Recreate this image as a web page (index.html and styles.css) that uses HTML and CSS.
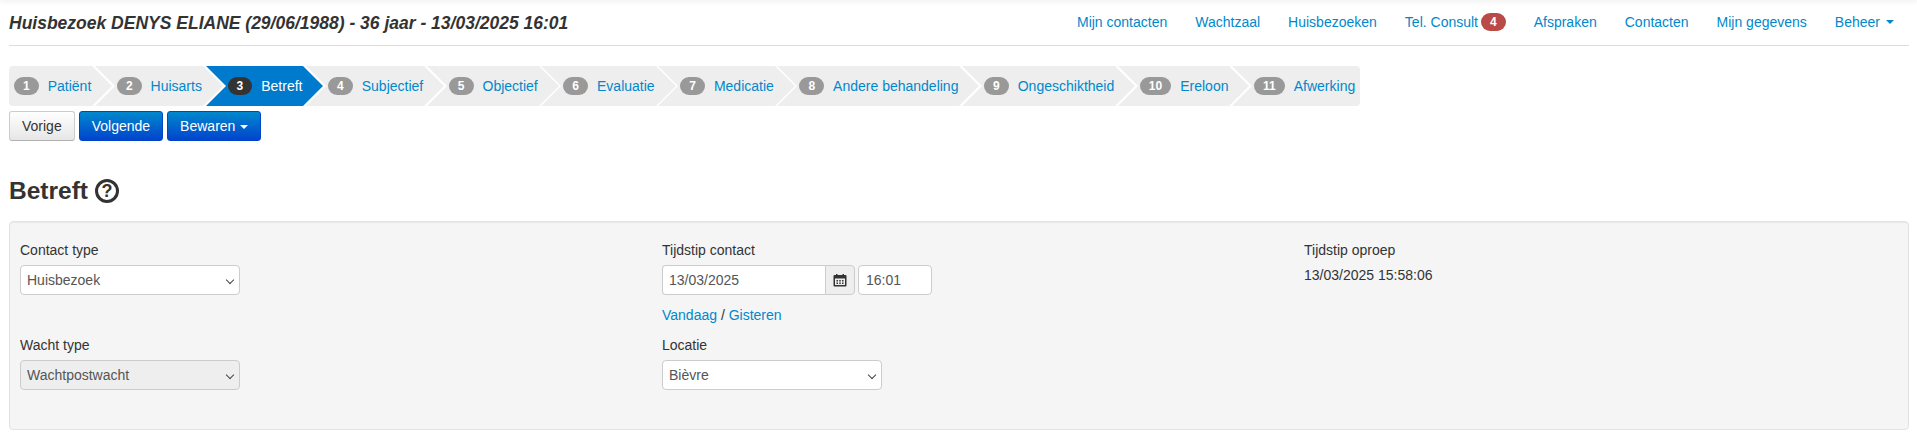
FILE: index.html
```html
<!DOCTYPE html>
<html>
	<head>
		<meta charset="utf-8">
		<title>Betreft</title>
		<link rel="stylesheet" href="styles.css">
	</head>
	<body>
		<div class="top_shadow"></div>
		<div class="container">
			<div class="page_header">
				<div class="page_title">Huisbezoek DENYS ELIANE (29/06/1988) - 36 jaar - 13/03/2025 16:01</div>
				<ul class="main_nav">
					<li><a href="#">Mijn contacten</a></li>
					<li><a href="#">Wachtzaal</a></li>
					<li><a href="#">Huisbezoeken</a></li>
					<li><a href="#">Tel. Consult</a><span class="badge badge_red">4</span></li>
					<li><a href="#">Afspraken</a></li>
					<li><a href="#">Contacten</a></li>
					<li><a href="#">Mijn gegevens</a></li>
					<li><a href="#">Beheer</a><span class="caret caret_blue"></span></li>
				</ul>
			</div>

			<ul class="wizard">
				<li><a href="#"><span class="badge">1</span>Patiënt</a></li>
				<li><a href="#"><span class="badge">2</span>Huisarts</a></li>
				<li class="active"><a href="#"><span class="badge">3</span>Betreft</a></li>
				<li><a href="#"><span class="badge">4</span>Subjectief</a></li>
				<li><a href="#"><span class="badge">5</span>Objectief</a></li>
				<li><a href="#"><span class="badge">6</span>Evaluatie</a></li>
				<li><a href="#"><span class="badge">7</span>Medicatie</a></li>
				<li><a href="#"><span class="badge">8</span>Andere behandeling</a></li>
				<li><a href="#"><span class="badge">9</span>Ongeschiktheid</a></li>
				<li><a href="#"><span class="badge">10</span>Ereloon</a></li>
				<li><a href="#"><span class="badge">11</span>Afwerking</a></li>
			</ul>

			<div class="button_row">
				<button class="btn">Vorige</button>
				<button class="btn btn_primary">Volgende</button>
				<button class="btn btn_primary">Bewaren<span class="caret"></span></button>
			</div>

			<h2 class="section_title">Betreft <span class="help_icon">?</span></h2>

			<div class="well">
				<div class="field">
					<label>Contact type</label>
					<div class="select_wrap">
						<select>
							<option>Huisbezoek</option>
						</select>
					</div>
				</div>
				<div class="field">
					<label>Tijdstip contact</label>
					<div class="date_row">
						<div class="date_group">
							<input type="text" class="date_input" value="13/03/2025">
							<span class="date_addon">
								<svg width="14" height="14" viewBox="0 0 14 14">
									<path fill="#333" d="M1.500 2H3V1h1.500v1h5V1H11v1h1.500a1 1 0 0 1 1 1v9.500a1 1 0 0 1-1 1h-11a1 1 0 0 1-1-1V3a1 1 0 0 1 1-1zM2 5.500v6.500h10V5.500z"/>
									<path fill="#333" d="M3.500 7h1.500v1.500H3.500zM6.250 7h1.500v1.500h-1.500zM9 7h1.500v1.500H9zM3.500 9.500h1.500V11H3.500zM6.250 9.500h1.500V11h-1.500zM9 9.500h1.500V11H9z"/>
								</svg>
							</span>
						</div>
						<input type="text" class="time_input" value="16:01">
					</div>
					<div class="date_links"><a href="#">Vandaag</a> / <a href="#">Gisteren</a></div>
				</div>
				<div class="field">
					<label>Tijdstip oproep</label>
					<div class="static_value">13/03/2025 15:58:06</div>
				</div>
				<div class="field">
					<label>Wacht type</label>
					<div class="select_wrap">
						<select disabled>
							<option>Wachtpostwacht</option>
						</select>
					</div>
				</div>
				<div class="field">
					<label>Locatie</label>
					<div class="select_wrap">
						<select>
							<option>Bièvre</option>
						</select>
					</div>
				</div>
			</div>
		</div>
	</body>
</html>
```

FILE: styles.css
```css
*{
	box-sizing:border-box;
}

body{
	margin:0;
	font-family:"Liberation Sans", Arial, sans-serif;
	font-size:14px;
	line-height:20px;
	color:#333;
	background-color:#fff;
}

a{
	color:#0088cc;
	text-decoration:none;
}

ul{
	list-style:none;
	margin:0;
	padding:0;
}

.top_shadow{
	height:0;
	box-shadow:0 0 5px 1px rgba(0,0,0,0.12);
}

.container{
	padding:0 8px 0 9px;
}

.page_header{
	display:flex;
	justify-content:space-between;
	align-items:center;
	height:46px;
	border-bottom:1px solid #ddd;
}

.page_title{
	font-size:17.5px;
	font-weight:bold;
	font-style:italic;
}

.main_nav{
	display:flex;
	align-items:center;
	gap:28px;
	padding-right:15px;
	margin-top:-2px;
}

.main_nav li{
	display:flex;
	align-items:center;
}

.badge{
	display:inline-block;
	height:18px;
	padding:0 9px;
	border-radius:9px;
	font-size:12px;
	font-weight:bold;
	line-height:18px;
	color:#fff;
	background-color:#999;
}

.badge_red{
	margin-left:3px;
	background-color:#b94a48;
}

.caret{
	display:inline-block;
	width:0;
	height:0;
	margin-left:5px;
	vertical-align:middle;
	border-top:4px solid #fff;
	border-left:4px solid transparent;
	border-right:4px solid transparent;
}

.caret_blue{
	margin-left:6px;
	border-top-color:#0088cc;
}

/* stappen */
.wizard{
	display:flex;
	margin-top:20px;
}

.wizard li{
	position:relative;
	margin-right:2.6px;
}

.wizard li:last-child{
	margin-right:0;
}

.wizard a{
	display:flex;
	align-items:center;
	gap:9px;
	height:40px;
	padding:0 1px 0 22px;
	background-color:#eee;
	white-space:nowrap;
}

.wizard li:first-child a{
	padding-left:5px;
	border-radius:4px 0 0 4px;
}

.wizard li:last-child a{
	padding-right:5px;
	border-radius:0 4px 4px 0;
}

.wizard li:before{
	content:"";
	position:absolute;
	top:0;
	left:0;
	z-index:1;
	border-top:20px solid transparent;
	border-bottom:20px solid transparent;
	border-left:20px solid #fff;
}

.wizard li:after{
	content:"";
	position:absolute;
	top:0;
	right:-20px;
	z-index:2;
	border-top:20px solid transparent;
	border-bottom:20px solid transparent;
	border-left:20px solid #eee;
}

.wizard li:first-child:before,
.wizard li:last-child:after{
	display:none;
}

.wizard .active a{
	color:#fff;
	background-color:#007acc;
}

.wizard .active:after{
	border-left-color:#007acc;
}

.wizard .active .badge{
	background-color:#333;
}

/* knoppen */
.button_row{
	display:flex;
	gap:4px;
	margin-top:5px;
}

.btn{
	height:30px;
	padding:0 12px;
	border:1px solid #ccc;
	border-bottom-color:#b3b3b3;
	border-radius:3px;
	font-family:inherit;
	font-size:14px;
	color:#333;
	background:linear-gradient(to bottom, #fff, #e6e6e6);
}

.btn_primary{
	border-color:#04c;
	color:#fff;
	background:linear-gradient(to bottom, #08c, #04c);
}

.section_title{
	display:flex;
	align-items:center;
	gap:7px;
	margin:35px 0 15px;
	font-size:24.5px;
	line-height:30px;
}

.help_icon{
	width:24px;
	height:24px;
	border:3px solid #333;
	border-radius:50%;
	font-size:18px;
	line-height:18px;
	text-align:center;
}

/* formulier */
.well{
	display:grid;
	grid-template-columns:642px 642px 1fr;
	align-content:start;
	row-gap:10px;
	height:209px;
	padding:18px 10px 0;
	border:1px solid #e3e3e3;
	border-radius:4px;
	background-color:#f5f5f5;
	box-shadow:inset 0 1px 1px rgba(0,0,0,0.05);
}

.field label{
	display:block;
	margin-bottom:5px;
}

select,
input{
	height:30px;
	border:1px solid #ccc;
	border-radius:4px;
	font-family:inherit;
	font-size:14px;
	color:#555;
	background-color:#fff;
}

.select_wrap{
	position:relative;
	width:220px;
}

.select_wrap:after{
	content:"";
	position:absolute;
	top:12px;
	right:7px;
	width:5px;
	height:5px;
	border-right:1px solid #444;
	border-bottom:1px solid #444;
	transform:rotate(45deg);
	pointer-events:none;
}

.select_wrap select{
	display:block;
	width:100%;
	padding:0 20px 0 6px;
	appearance:none;
}

select:disabled{
	color:#555;
	background-color:#eee;
	opacity:1;
}

.date_row{
	display:flex;
	gap:3px;
}

.date_group{
	display:flex;
}

.date_input{
	width:163px;
	padding:0 6px;
	border-right:0;
	border-radius:4px 0 0 4px;
}

.date_addon{
	display:flex;
	align-items:center;
	justify-content:center;
	width:30px;
	height:30px;
	border:1px solid #ccc;
	border-radius:0 4px 4px 0;
	background-color:#eee;
}

.time_input{
	width:74px;
	padding:0 7px;
}

.date_links{
	margin-top:10px;
}

.static_value{
	margin-top:5px;
}
```
